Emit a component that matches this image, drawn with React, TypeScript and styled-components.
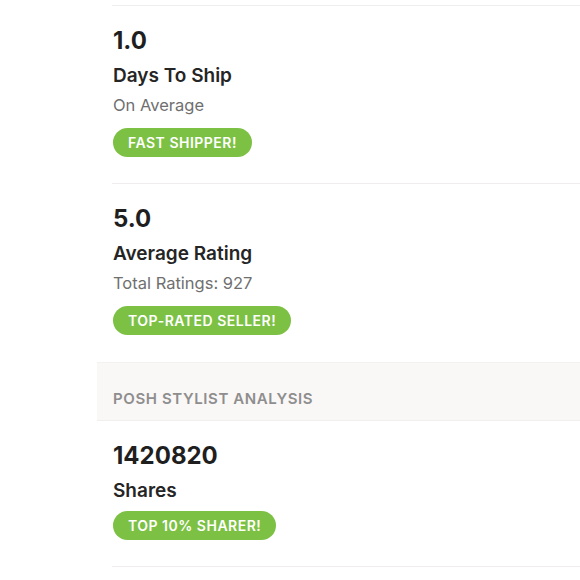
import React from "react";
import styled, { createGlobalStyle } from "styled-components";

const GlobalStyle = createGlobalStyle`
  html, body {
    margin: 0;
    padding: 0;
    background: #ffffff;
  }
  body {
    font-family: Inter, "Liberation Sans", sans-serif;
    color: #222222;
  }
`;

interface Stat {
  value: string;
  label: string;
  note?: string;
  badge: string;
}

const sellerStats: Stat[] = [
  { value: "1.0", label: "Days To Ship", note: "On Average", badge: "FAST SHIPPER!" },
  { value: "5.0", label: "Average Rating", note: "Total Ratings: 927", badge: "TOP-RATED SELLER!" },
];

const stylistStats: Stat[] = [
  { value: "1420820", label: "Shares", badge: "TOP 10% SHARER!" },
];

const Page = styled.div`
  margin-left: 97px;
  padding-top: 5px;
`;

const StatItem = styled.div<{ $topRule: boolean; $bottomRule: boolean }>`
  margin-left: 15px;
  padding: 20px 0 26px 1px;
  border-top: ${({ $topRule }) => ($topRule ? "1px solid #efeded" : "none")};
  border-bottom: ${({ $bottomRule }) => ($bottomRule ? "1px solid #efeded" : "none")};
`;

const Value = styled.div`
  font-size: 24px;
  line-height: 30px;
  font-weight: 700;
  color: #1f1f1f;
`;

const Label = styled.div`
  margin-top: 8px;
  font-size: 19px;
  line-height: 24px;
  font-weight: 600;
  color: #252525;
`;

const Note = styled.div`
  margin-top: 5px;
  font-size: 16.5px;
  line-height: 24px;
  color: #6f6f6f;
`;

const Badge = styled.span<{ $gap: number }>`
  display: inline-flex;
  align-items: center;
  box-sizing: border-box;
  height: 29px;
  margin-top: ${({ $gap }) => $gap}px;
  padding: 0 15px;
  border-radius: 15px;
  background: #7cc143;
  color: #ffffff;
  font-size: 14px;
  font-weight: 600;
  letter-spacing: 0.5px;
`;

const SectionBand = styled.div`
  box-sizing: border-box;
  height: 59px;
  display: flex;
  align-items: center;
  padding: 14px 0 0 16px;
  margin-top: 1px;
  background: #faf7f7;
  border-top: 1px solid #f4f1f1;
  border-bottom: 1px solid #f1eeee;
  color: #8e8e8e;
  font-size: 15px;
  font-weight: 600;
  letter-spacing: 0.6px;
`;

const BadgeRow = styled.div`
  display: flex;
`;

const StatBlock = ({ stat, topRule, bottomRule }: { stat: Stat; topRule: boolean; bottomRule: boolean }) => (
  <StatItem $topRule={topRule} $bottomRule={bottomRule}>
    <Value>{stat.value}</Value>
    <Label>{stat.label}</Label>
    {stat.note && <Note>{stat.note}</Note>}
    <BadgeRow>
      <Badge $gap={stat.note ? 11 : 8}>{stat.badge}</Badge>
    </BadgeRow>
  </StatItem>
);

export default function App() {
  return (
    <>
      <GlobalStyle />
      <Page>
        {sellerStats.map((s) => (
          <StatBlock key={s.label} stat={s} topRule bottomRule={false} />
        ))}
        <SectionBand>POSH STYLIST ANALYSIS</SectionBand>
        {stylistStats.map((s) => (
          <StatBlock key={s.label} stat={s} topRule={false} bottomRule />
        ))}
      </Page>
    </>
  );
}
